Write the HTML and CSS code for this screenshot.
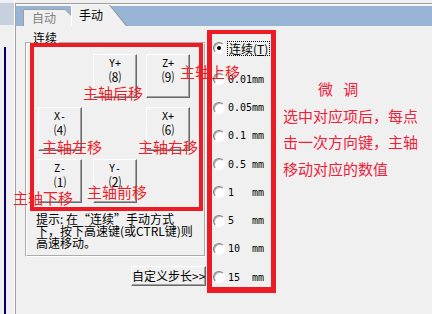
FILE: index.html
```html
<!DOCTYPE html>
<html lang="zh-CN">
<head>
<meta charset="utf-8">
<title>手动</title>
<link rel="stylesheet" href="styles.css">
</head>
<body>
<div class="window">
  <aside class="side">
    <div class="side-top"></div>
    <div class="side-line"></div>
  </aside>
  <section class="panel">
    <div class="tabs">
      <div class="tab tab-off"><span class="tab-face">自动</span></div>
      <div class="tab tab-on"><span class="tab-face">手动</span></div>
    </div>
    <div class="body">
      <div class="left">
        <fieldset class="group">
          <legend class="group-label">连续</legend>
          <div class="pad">
            <button class="key k-yp">Y+<br><span class="num">⑻</span></button>
            <button class="key k-zp">Z+<br><span class="num">⑼</span></button>
            <button class="key k-xm">X-<br><span class="num">⑷</span></button>
            <button class="key k-xp">X+<br><span class="num">⑹</span></button>
            <button class="key k-zm">Z-<br><span class="num">⑴</span></button>
            <button class="key k-ym">Y-<br><span class="num">⑵</span></button>
          </div>
          <p class="hint">提示: 在“连续”手动方式<br>下，按下高速键(或CTRL键)则<br>高速移动。</p>
        </fieldset>
        <button class="custom">自定义步长&gt;&gt;</button>
      </div>
      <ul class="steps">
        <li class="step first"><span class="radio on"></span><span class="focus">连续(<u>T</u>)</span></li>
        <li class="step"><span class="radio"></span><span class="val">0.01mm</span></li>
        <li class="step"><span class="radio"></span><span class="val">0.05mm</span></li>
        <li class="step"><span class="radio"></span><span class="val">0.1 mm</span></li>
        <li class="step"><span class="radio"></span><span class="val">0.5 mm</span></li>
        <li class="step"><span class="radio"></span><span class="val">1   mm</span></li>
        <li class="step"><span class="radio"></span><span class="val">5   mm</span></li>
        <li class="step"><span class="radio"></span><span class="val">10  mm</span></li>
        <li class="step"><span class="radio"></span><span class="val">15  mm</span></li>
      </ul>
    </div>
  </section>

  <div class="marks">
    <div class="box box-pad"></div>
    <div class="box box-steps"></div>
    <span class="note n-back">主轴后移</span>
    <span class="note n-up">主轴上移</span>
    <span class="note n-left">主轴左移</span>
    <span class="note n-right">主轴右移</span>
    <span class="note n-down">主轴下移</span>
    <span class="note n-front">主轴前移</span>
    <div class="note-block">
      <div class="title">微 调</div>
      <div>选中对应项后，每点</div>
      <div>击一次方向键，主轴</div>
      <div>移动对应的数值</div>
    </div>
  </div>
</div>
</body>
</html>
```
FILE: styles.css
```css
html, body {
  margin: 0;
  padding: 0;
}
body {
  width: 432px;
  height: 314px;
  overflow: hidden;
  background: #f0f0f0;
  color: #000;
  font-family: "Noto Sans CJK SC", "Liberation Sans", sans-serif;
  font-size: 12px;
}
.window {
  position: relative;
  display: flex;
  height: 314px;
}

/* left strip */
.side {
  width: 14px;
  flex: none;
  display: flex;
  flex-direction: column;
  border-right: 1px solid #ffffff;
}
.side-top {
  margin-top: 3px;
  height: 22px;
  background: #c6d1dd;
}
.side-line {
  margin: 22px 0 0 4px;
  width: 2px;
  flex: 1;
  background: #000066;
}

/* main panel */
.panel {
  flex: 1;
  margin-top: 3px;
  border-top: 1px solid #a0a0a0;
  border-left: 1px solid #a0a0a0;
  display: flex;
  flex-direction: column;
}
.tabs {
  height: 22px;
  display: flex;
  align-items: flex-end;
  padding-left: 7px;
  background: linear-gradient(#f6f6f6 0 2px, #98b4d4 2px);
}
.tab {
  box-sizing: border-box;
}
.tab-off {
  width: 48px;
  height: 17px;
  padding: 1px 0 0 1px;
  background: #a0a0a0;
  clip-path: polygon(0 0, 42px 0, 48px 6px, 48px 100%, 0 100%);
}
.tab-off .tab-face {
  display: block;
  height: 100%;
  padding-left: 8px;
  line-height: 16px;
  color: #808080;
  background: #f0f0f0;
  clip-path: polygon(0 0, 41px 0, 47px 6px, 47px 100%, 0 100%);
}
.tab-on {
  width: 56px;
  height: 21px;
  background: #8a8a8a;
  clip-path: polygon(0 0, 39px 0, 56px 100%, 0 100%);
}
.tab-on .tab-face {
  display: block;
  box-sizing: border-box;
  height: 100%;
  padding-left: 7px;
  line-height: 20px;
  border-left: 1px solid #ffffff;
  background: #f0f0f0;
  clip-path: polygon(0 0, 38px 0, 55px 100%, 0 100%);
}

.body {
  display: flex;
  padding-left: 9px;
}
.left {
  width: 181px;
  flex: none;
  display: flex;
  flex-direction: column;
}
.group {
  box-sizing: border-box;
  width: 181px;
  margin: 6px 0 0;
  padding: 0 0 6px;
  border: 2px groove #ffffff;
  min-inline-size: 0;
}
.group-label {
  margin-left: 4px;
  padding: 0 2px 10px;
  line-height: 12px;
}
.pad {
  display: grid;
  grid-template-columns: 55px 53px 44px;
  grid-template-rows: 53px 52px 44px;
  padding-left: 11px;
}
.key {
  box-sizing: border-box;
  width: 44px;
  height: 44px;
  padding: 3px 0 0;
  margin: 0;
  align-self: start;
  display: flex;
  flex-direction: column;
  align-items: center;
  justify-content: flex-start;
  background: #f0f0f0;
  border: 1px solid;
  border-color: #ffffff #696969 #696969 #ffffff;
  box-shadow: inset -1px -1px 0 #a0a0a0;
  font-family: "DejaVu Sans Mono", monospace;
  font-size: 10px;
  line-height: 12px;
  color: #000;
}
.key br { display: none; }
.key .num {
  font-family: "Noto Sans CJK SC", sans-serif;
  font-size: 12px;
  line-height: 13px;
}
.k-yp { grid-area: 1 / 2; }
.k-zp { grid-area: 1 / 3; }
.k-xm { grid-area: 2 / 1; }
.k-xp { grid-area: 2 / 3; }
.k-zm { grid-area: 3 / 1; }
.k-ym { grid-area: 3 / 2; }

.hint {
  margin: 10px 0 0 9px;
  line-height: 12px;
  white-space: nowrap;
}
.custom {
  align-self: flex-end;
  box-sizing: border-box;
  width: 75px;
  height: 20px;
  margin-top: 9px;
  padding: 0;
  background: #f0f0f0;
  border: 1px solid;
  border-color: #ffffff #696969 #696969 #ffffff;
  box-shadow: inset -1px -1px 0 #a0a0a0;
  font-family: "Noto Sans CJK SC", sans-serif;
  font-size: 12px;
  line-height: 16px;
  color: #000;
  white-space: nowrap;
  overflow: hidden;
}

/* step radios */
.steps {
  list-style: none;
  margin: 15px 0 0 7px;
  padding: 0;
  display: flex;
  flex-direction: column;
  gap: 14.25px;
}
.step {
  height: 14px;
  display: flex;
  align-items: center;
  gap: 3px;
}
.step.first {
  margin-bottom: 3px;
}
.radio {
  box-sizing: border-box;
  width: 12px;
  height: 12px;
  border-radius: 50%;
  background: #ffffff;
  border: 1px solid;
  border-color: #808080 #ffffff #ffffff #808080;
  box-shadow: inset 1px 1px 0 #b0b0b0;
  display: flex;
  align-items: center;
  justify-content: center;
}
.radio.on::after {
  content: "";
  width: 4px;
  height: 4px;
  border-radius: 50%;
  background: #000;
}
.focus {
  outline: 1px dotted #000;
  padding: 0 1px;
  line-height: 13px;
}
.val {
  font-family: "DejaVu Sans Mono", monospace;
  font-size: 10px;
  white-space: pre;
}

/* annotations drawn over the screenshot */
.marks {
  position: absolute;
  inset: 0;
  pointer-events: none;
}
.box {
  position: absolute;
  box-sizing: border-box;
  border: 4px solid #ed1c24;
}
.box-pad {
  left: 30px;
  top: 43px;
  width: 173px;
  height: 168px;
}
.box-steps {
  left: 207px;
  top: 30px;
  width: 69px;
  height: 263px;
  border-width: 4px 5px 6px 5px;
}
.note {
  position: absolute;
  font-size: 15px;
  line-height: 15px;
  color: #f01e28;
  white-space: nowrap;
}
.n-back { left: 83px; top: 85px; }
.n-up { left: 180px; top: 64px; }
.n-left { left: 42px; top: 139px; }
.n-right { left: 138px; top: 139px; }
.n-down { left: 13px; top: 190px; }
.n-front { left: 87px; top: 184px; }
.note-block {
  position: absolute;
  left: 283px;
  top: 76px;
  font-size: 15px;
  line-height: 26.5px;
  color: #f0203a;
  white-space: nowrap;
}
.note-block .title {
  padding-left: 35px;
  word-spacing: 7px;
}
```
